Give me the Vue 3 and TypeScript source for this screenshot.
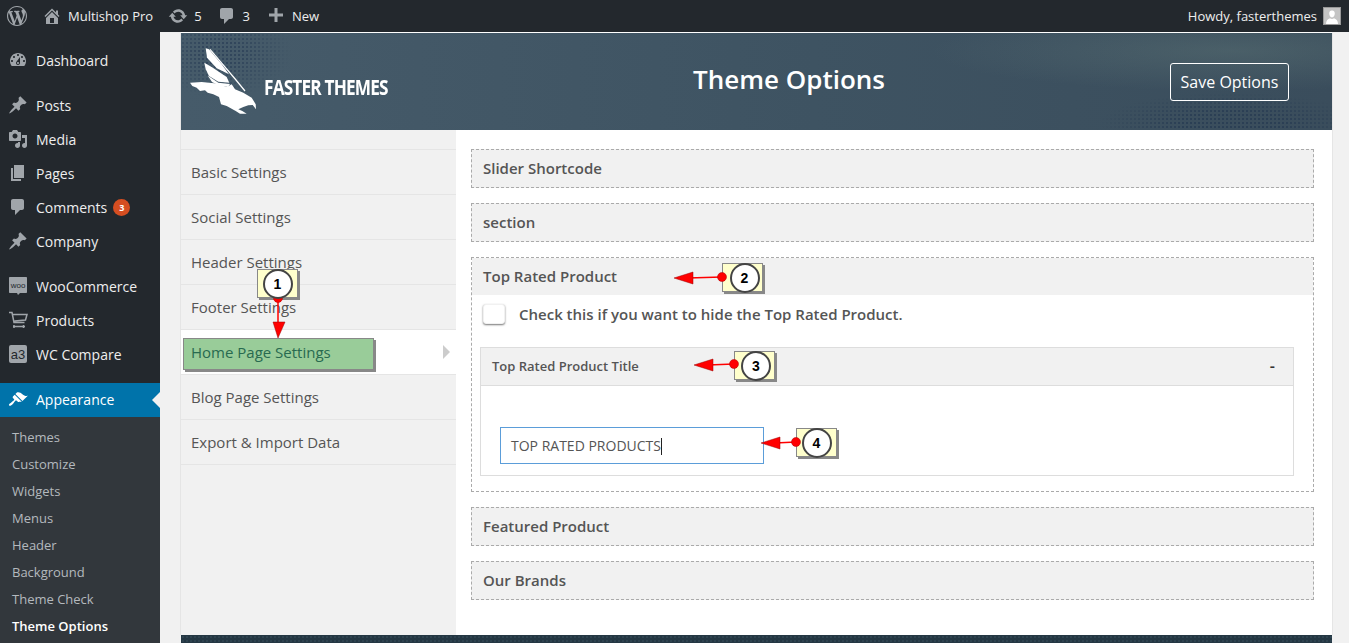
<script setup lang="ts">
interface MenuItem {
  label: string
  icon: string
  cls?: string
  badge?: number
  custom?: string
}

const paths = {
  wp: 'M20 10c0-5.51-4.49-10-10-10C4.48 0 0 4.49 0 10c0 5.52 4.48 10 10 10 5.51 0 10-4.48 10-10zM7.78 15.37L4.37 6.22c.55-.02 1.17-.08 1.17-.08.5-.06.44-1.13-.06-1.11 0 0-1.45.11-2.37.11-.18 0-.37 0-.58-.01C4.12 2.69 6.87 1.11 10 1.11c2.33 0 4.45.87 6.05 2.34-.68-.11-1.65.39-1.65 1.58 0 .74.45 1.36.9 2.1.35.61.55 1.36.55 2.46 0 1.49-1.4 5-1.4 5l-3.03-8.37c.54-.02.82-.17.82-.17.5-.05.44-1.25-.06-1.22 0 0-1.44.12-2.38.12-.87 0-2.33-.12-2.33-.12-.5-.03-.56 1.2-.06 1.22l.92.08 1.26 3.41zM17.41 10c.24-.64.74-1.87.43-4.25.7 1.29 1.05 2.71 1.05 4.25 0 3.29-1.73 6.24-4.4 7.78.97-2.59 1.94-5.2 2.92-7.78zM6.1 18.09C3.12 16.65 1.11 13.53 1.11 10c0-1.3.23-2.48.72-3.59C3.25 10.3 4.67 14.2 6.1 18.09zm4.03-6.63l2.58 6.98c-.86.29-1.76.45-2.71.45-.79 0-1.57-.11-2.29-.33.81-2.38 1.62-4.74 2.42-7.1z',
  home: 'M16 8.5l1.53 1.53-1.06 1.06L10 4.62l-6.47 6.47-1.06-1.06L10 2.5l4 4v-2h2v4zm-6-2.46l6 5.99V18H4v-5.97zM12 17v-5H8v5h4z',
  update: 'M10.2 3.28c3.53 0 6.43 2.61 6.92 6h2.08l-3.5 4-3.5-4h2.32c-.45-1.97-2.21-3.45-4.32-3.45-1.45 0-2.73.71-3.54 1.78L4.95 5.66C6.23 4.2 8.11 3.28 10.2 3.28zm-.4 13.44c-3.52 0-6.43-2.61-6.92-6H.8l3.5-4c1.17 1.33 2.33 2.67 3.5 4H5.48c.45 1.97 2.21 3.45 4.32 3.45 1.45 0 2.73-.71 3.54-1.78l1.71 1.95c-1.28 1.46-3.15 2.38-5.25 2.38z',
  comment: 'M5 2h9c1.1 0 2 .9 2 2v7c0 1.1-.9 2-2 2h-2l-5 5v-5H5c-1.1 0-2-.9-2-2V4c0-1.1.9-2 2-2z',
  plus: 'M17 7.5v3h-5.5V16h-3v-5.5H3v-3h5.5V2h3v5.5z',
  dashboard: 'M3.76 16h12.48c1.1-1.37 1.76-3.11 1.76-5 0-4.42-3.58-8-8-8s-8 3.58-8 8c0 1.89.66 3.63 1.76 5zM10 4c.55 0 1 .45 1 1s-.45 1-1 1-1-.45-1-1 .45-1 1-1zM6 6c.55 0 1 .45 1 1s-.45 1-1 1-1-.45-1-1 .45-1 1-1zm8 0c.55 0 1 .45 1 1s-.45 1-1 1-1-.45-1-1 .45-1 1-1zm-5.37 5.55L12 7v6c0 1.1-.9 2-2 2s-2-.9-2-2c0-.57.24-1.08.63-1.45zM4 10c.55 0 1 .45 1 1s-.45 1-1 1-1-.45-1-1 .45-1 1-1zm12 0c.55 0 1 .45 1 1s-.45 1-1 1-1-.45-1-1 .45-1 1-1zm-5 3c0-.55-.45-1-1-1s-1 .45-1 1 .45 1 1 1 1-.45 1-1z',
  pin: 'M10.44 3.02l1.82-1.82 6.36 6.35-1.83 1.82c-1.05-.68-2.48-.57-3.41.36l-.75.75c-.92.93-1.04 2.35-.35 3.41l-1.83 1.82-2.41-2.41-2.8 2.79c-.42.42-3.38 2.71-3.8 2.29s1.86-3.39 2.28-3.81l2.79-2.79L4.1 9.36l1.83-1.82c1.05.69 2.48.57 3.4-.36l.75-.75c.93-.92 1.05-2.35.36-3.41z',
  media: 'M13 11V4c0-.55-.45-1-1-1h-1.67L9 1H5L3.67 3H2c-.55 0-1 .45-1 1v7c0 .55.45 1 1 1h10c.55 0 1-.45 1-1zM7 4.5c1.38 0 2.5 1.12 2.5 2.5S8.38 9.5 7 9.5 4.5 8.38 4.5 7 5.62 4.5 7 4.5zM14 6h5v10.5c0 1.38-1.12 2.5-2.5 2.5S14 17.88 14 16.5s1.12-2.5 2.5-2.5c.17 0 .34.02.5.05V9h-3V6zm-4 8.05V13h2v3.5c0 1.38-1.12 2.5-2.5 2.5S7 17.88 7 16.5 8.12 14 9.5 14c.17 0 .34.02.5.05z',
  page: 'M6 15V2h10v13H6zm-1 1h8v2H3V5h2v11z',
  brush: 'M14.48 11.06L7.41 3.99l1.5-1.5c.5-.56 2.3-.47 3.51.32 1.21.8 1.43 1.28 2.91 2.1 1.18.64 2.45 1.26 4.45.85zm-.71.71L6.7 4.7 4.93 6.47c-.39.39-.39 1.02 0 1.41l1.06 1.06c.39.39.39 1.03 0 1.42-.6.6-1.43 1.11-2.21 1.69-.35.26-.7.53-1.01.84C1.43 13.23.4 14.75 1.2 15.55s2.32-.23 3.62-1.57c.31-.31.58-.66.84-1.01.58-.78 1.09-1.61 1.69-2.21.39-.39 1.02-.39 1.41 0l1.06 1.06c.39.39 1.02.39 1.41 0z'
}

const menu: MenuItem[] = [
  { label: 'Dashboard', icon: paths.dashboard },
  { label: 'Posts', icon: paths.pin, cls: 'gap-posts' },
  { label: 'Media', icon: paths.media },
  { label: 'Pages', icon: paths.page },
  { label: 'Comments', icon: paths.comment, badge: 3 },
  { label: 'Company', icon: paths.pin },
  { label: 'WooCommerce', icon: '', cls: 'gap-woo', custom: 'woo' },
  { label: 'Products', icon: '', custom: 'cart' },
  { label: 'WC Compare', icon: '', custom: 'a3' }
]

const submenu = ['Themes', 'Customize', 'Widgets', 'Menus', 'Header', 'Background', 'Theme Check']

const tabs = [
  'Basic Settings',
  'Social Settings',
  'Header Settings',
  'Footer Settings',
  'Home Page Settings',
  'Blog Page Settings',
  'Export & Import Data'
]

// numbered callouts pasted over the screenshot, x/y = yellow note top left
const notes = [
  { n: 1, x: 257, y: 269, pad: 0 },
  { n: 2, x: 722, y: 263, pad: 4 },
  { n: 3, x: 734, y: 351, pad: 3 },
  { n: 4, x: 796, y: 428, pad: 0 }
]

const arrows = [
  { line: [278, 298, 278, 325], head: '273,322 285,322 278,338', dot: [278, 298] },
  { line: [722, 277, 688, 278], head: '674,278 693,272 693,284', dot: [722, 277] },
  { line: [734, 364, 708, 365], head: '694,365 713,359 713,371', dot: [734, 364] },
  { line: [796, 442, 775, 443], head: '761,443 780,437 780,449', dot: [796, 442] }
]
</script>

<template>
  <div class="page">
    <header class="adminbar">
      <div class="bar-left">
        <svg class="wp" viewBox="0 0 20 20"><path :d="paths.wp" fill-rule="evenodd" /></svg>
        <span class="bar-item">
          <svg class="bar-icon" viewBox="0 0 20 20"><path :d="paths.home" /></svg>Multishop Pro
        </span>
        <span class="bar-item">
          <svg class="bar-icon" viewBox="0 0 20 20"><path :d="paths.update" /></svg>5
        </span>
        <span class="bar-item comments">
          <svg class="bar-icon" viewBox="0 0 20 20"><path :d="paths.comment" /></svg>3
        </span>
        <span class="bar-item">
          <svg class="bar-icon" viewBox="0 0 20 20"><path :d="paths.plus" /></svg>New
        </span>
      </div>
      <div class="howdy">
        Howdy, fasterthemes
        <span class="avatar">
          <svg viewBox="0 0 16 16"><path d="M8 2.500c1.800 0 2.800 1.300 2.800 3.100S9.700 9.500 8 9.500 5.200 7.400 5.200 5.600 6.200 2.500 8 2.500zM2 16c0-3.500 2-5.300 4-5.800.6.500 1.200.8 2 .8s1.400-.3 2-.8c2 .5 4 2.300 4 5.800z" /></svg>
        </span>
      </div>
    </header>

    <div class="layout">
      <aside class="sidebar">
        <nav class="menu">
          <a v-for="item in menu" :key="item.label" class="menu-item" :class="item.cls">
            <svg v-if="item.custom === 'woo'" class="menu-icon" viewBox="0 0 20 20">
              <path d="M2 1h16c.6 0 1 .4 1 1v14c0 .6-.4 1-1 1h-6l-2 2-1-2H2c-.6 0-1-.4-1-1V2c0-.6.4-1 1-1z" />
              <text x="10" y="11.500" class="woo-text">woo</text>
            </svg>
            <svg v-else-if="item.custom === 'cart'" class="menu-icon cart" viewBox="0 0 20 20">
              <path d="M1 2.500h3l2 10h10.500M4.500 4.500H19l-1.500 5.500-11 1" />
              <path d="M6 15v3M15.500 15v3M5 16.500h12" />
            </svg>
            <svg v-else-if="item.custom === 'a3'" class="menu-icon" viewBox="0 0 20 20">
              <rect x="1" y="1" width="18" height="18" rx="2" />
              <text x="10" y="14.500" class="a3-text">a3</text>
            </svg>
            <svg v-else class="menu-icon" viewBox="0 0 20 20"><path :d="item.icon" fill-rule="evenodd" /></svg>
            <span>{{ item.label }}</span>
            <span v-if="item.badge" class="badge">{{ item.badge }}</span>
          </a>
        </nav>

        <a class="menu-item current">
          <svg class="menu-icon" viewBox="0 0 20 20"><path :d="paths.brush" /></svg>
          <span>Appearance</span>
        </a>
        <ul class="submenu">
          <li v-for="s in submenu" :key="s">{{ s }}</li>
          <li class="on">Theme Options</li>
        </ul>
      </aside>

      <main class="content">
        <section class="panel">
          <div class="panel-head">
            <div class="logo">
              <svg class="eagle" viewBox="0 0 66 66">
                <path d="M15.700 .3L19 1.300 31.700 16.300 39 26.300 26.700 20.300 17 9.700z" />
                <path d="M14.300 14.700L21.700 19 36.700 29 39.300 34.700 28.300 33.700 19 28 15.700 21.300z" />
                <path d="M17.700 27.500L28.300 34.700 40 36 38 39 30 38 22 34z" />
                <path d="M0 34.700L11.700 34 26.700 35.500 36.700 39 41.700 36.300 45 41.300 53.300 44.700 61.700 49.700 65.700 56.300 66 61.300 62.700 57 58.300 57.300 53.300 59 48.300 61.300 52.300 63 56.700 65.700 50 65.700 45.700 63 36.700 58 31 56.300 29 49 23.300 46.300 17.700 44.700 15 42.300 10 43 6.700 39.700 2.300 38z" />
                <path class="edge" d="M20 1.300L46 32 55 43" />
              </svg>
              <span class="brand">FASTER THEMES</span>
            </div>
            <h1>Theme Options</h1>
            <button class="save">Save Options</button>
          </div>

          <div class="panel-body">
            <ul class="tabs">
              <li v-for="t in tabs" :key="t" :class="{ active: t === 'Home Page Settings' }">{{ t }}</li>
            </ul>

            <div class="sections">
              <div class="section"><h3>Slider Shortcode</h3></div>
              <div class="section"><h3>section</h3></div>
              <div class="section open">
                <h3>Top Rated Product</h3>
                <label class="check">
                  <span class="checkbox"></span>
                  Check this if you want to hide the Top Rated Product.
                </label>
                <div class="field">
                  <div class="field-head">
                    <span>Top Rated Product Title</span>
                    <span class="minus">-</span>
                  </div>
                  <div class="field-body">
                    <div class="input">TOP RATED PRODUCTS<i class="caret"></i></div>
                  </div>
                </div>
              </div>
              <div class="section"><h3>Featured Product</h3></div>
              <div class="section"><h3>Our Brands</h3></div>
            </div>
          </div>
        </section>
        <div class="panel-foot"></div>
      </main>
    </div>

    <!-- screenshot annotations -->
    <div class="hilite">Home Page Settings</div>
    <div
      v-for="note in notes"
      :key="note.n"
      class="note"
      :style="{ left: note.x + 'px', top: note.y + 'px', paddingLeft: note.pad + 'px' }"
    >
      <span class="num">{{ note.n }}</span>
    </div>
    <svg class="arrows" width="1349" height="643">
      <g v-for="(a, i) in arrows" :key="i">
        <line :x1="a.line[0]" :y1="a.line[1]" :x2="a.line[2]" :y2="a.line[3]" stroke="#f00" stroke-width="1.500" />
        <polygon :points="a.head" fill="#f00" stroke="#900" stroke-width="0.500" />
        <circle :cx="a.dot[0]" :cy="a.dot[1]" r="4.500" fill="#f00" stroke="#a00" stroke-width="0.500" />
      </g>
    </svg>
  </div>
</template>

<style>
html,
body {
  margin: 0;
  background: #f1f1f1;
  overflow: hidden;
}
</style>

<style scoped>
.page {
  position: relative;
  width: 1349px;
  height: 643px;
  overflow: hidden;
  font-family: "Open Sans", "Liberation Sans", sans-serif;
  font-size: 14px;
  color: #444;
}

.adminbar {
  display: flex;
  justify-content: space-between;
  align-items: center;
  height: 32px;
  background: #23282d;
  color: #eee;
  font-size: 13px;
}

.bar-left {
  display: flex;
  align-items: center;
  padding-left: 7px;
}

.wp {
  width: 20px;
  height: 20px;
  fill: #a0a5aa;
  margin-right: 15px;
}

.bar-item {
  display: flex;
  align-items: center;
  margin-right: 15px;
}

.bar-item.comments {
  margin-right: 16px;
}

.bar-icon {
  width: 20px;
  height: 20px;
  fill: #a0a5aa;
  margin-right: 6px;
}

.howdy {
  display: flex;
  align-items: center;
  gap: 6px;
  padding-right: 8px;
}

.avatar {
  display: block;
  width: 16px;
  height: 16px;
  border: 1px solid #999;
  background: #c4c4c4;
  line-height: 0;
}

.avatar svg {
  width: 16px;
  height: 16px;
  fill: #fff;
}

.layout {
  display: flex;
  height: 611px;
}

.sidebar {
  width: 160px;
  flex: none;
  background: #23282d;
  padding-top: 11px;
  box-sizing: border-box;
}

.menu-item {
  display: flex;
  align-items: center;
  height: 34px;
  padding-left: 8px;
  color: #eee;
}

.menu-item.gap-posts {
  margin-top: 11px;
}

.menu-item.gap-woo {
  margin-top: 11px;
}

.menu-icon {
  width: 20px;
  height: 20px;
  flex: none;
  fill: #a0a5aa;
  margin-right: 8px;
}

.menu-icon.cart {
  fill: none;
  stroke: #a0a5aa;
  stroke-width: 1.500;
}

.woo-text,
.a3-text {
  fill: #23282d;
  text-anchor: middle;
  font-family: "Liberation Sans", sans-serif;
}

.woo-text {
  font-size: 8px;
}

.a3-text {
  font-size: 13px;
}

.badge {
  display: inline-block;
  width: 17px;
  height: 17px;
  margin-left: 6px;
  border-radius: 50%;
  background: #d54e21;
  color: #fff;
  font-size: 9px;
  font-weight: 700;
  line-height: 17px;
  text-align: center;
}

.menu-item.current {
  position: relative;
  margin-top: 12px;
  height: 34px;
  box-sizing: border-box;
  padding-bottom: 1px;
  background: #0073aa;
  color: #fff;
}

.menu-item.current .menu-icon {
  fill: #fff;
}

.menu-item.current::after {
  content: "";
  position: absolute;
  right: 0;
  top: 9px;
  border: 8px solid transparent;
  border-right-color: #f1f1f1;
}

.submenu {
  list-style: none;
  margin: 0;
  padding: 7px 0 0;
  background: #32373c;
  height: 220px;
  font-size: 13px;
}

.submenu li {
  height: 27px;
  line-height: 27px;
  padding-left: 12px;
  color: #b4b9be;
}

.submenu li.on {
  color: #fff;
  font-weight: 600;
}

.content {
  flex: 1;
  padding: 0 16px 0 20px;
  min-width: 0;
}

.panel {
  height: 603px;
  box-sizing: border-box;
  background: #fff;
  display: flex;
  flex-direction: column;
  border-top: 1px solid #fff;
  border-left: 1px solid #e5e5e5;
  border-right: 1px solid #e5e5e5;
}

.panel-head {
  position: relative;
  display: flex;
  align-items: center;
  justify-content: space-between;
  height: 97px;
  flex: none;
  padding: 0 43px 0 9px;
  color: #fff;
  background-color: #3e5362;
  background-image:
    radial-gradient(ellipse 300px 40px at 1050px 18px, rgba(110, 135, 130, 0.3), transparent),
    linear-gradient(90deg, #465b6a 0%, #3e5362 55%, #3a4d5c 100%);
}

/* speckled texture of the banner image */
.panel-head::before {
  content: "";
  position: absolute;
  inset: 0;
  background-image: radial-gradient(circle, rgba(25, 45, 75, 0.45) 0.7px, transparent 1.1px);
  background-size: 4px 4px;
  -webkit-mask-image:
    radial-gradient(ellipse 130px 30px at 1050px 90px, #000 40%, transparent),
    radial-gradient(ellipse 70px 45px at 40px 20px, #000 30%, transparent);
  mask-image:
    radial-gradient(ellipse 130px 30px at 1050px 90px, #000 40%, transparent),
    radial-gradient(ellipse 70px 45px at 40px 20px, #000 30%, transparent);
}

.logo {
  position: relative;
  display: flex;
  align-items: center;
}

.eagle {
  width: 66px;
  height: 66px;
  fill: #fff;
  margin-top: -1px;
}

.eagle .edge {
  fill: none;
  stroke: #fff;
  stroke-width: 1.200;
}

.brand {
  margin: 11px 0 0 8px;
  font-size: 21px;
  font-weight: 700;
  letter-spacing: -1px;
  white-space: nowrap;
  transform: scaleX(0.82);
  transform-origin: left;
}

.panel-head h1 {
  position: absolute;
  left: 512px;
  top: 26px;
  margin: 0;
  font-size: 26px;
  font-weight: 600;
  line-height: 40px;
}

.save {
  position: relative;
  width: 119px;
  height: 38px;
  border: 1px solid #fff;
  border-radius: 3px;
  background: transparent;
  color: #fff;
  font: 16px "Open Sans", sans-serif;
  padding: 0;
}

.panel-body {
  display: flex;
  flex: 1;
  min-height: 0;
}

.tabs {
  list-style: none;
  width: 275px;
  flex: none;
  margin: 0;
  padding: 19px 0 0;
  background: #f1f1f1;
  font-size: 15px;
  color: #555;
}

.tabs li {
  height: 44px;
  line-height: 44px;
  padding-left: 10px;
  border-top: 1px solid #e5e5e5;
}

.tabs li:last-child {
  border-bottom: 1px solid #e5e5e5;
}

.tabs li.active {
  position: relative;
  background: #fff;
}

.tabs li.active::after {
  content: "";
  position: absolute;
  right: 6px;
  top: 15px;
  border: 7px solid transparent;
  border-left-color: #ccc;
  border-right-width: 0;
}

.sections {
  flex: 1;
  display: flex;
  flex-direction: column;
  gap: 15px;
  padding: 19px 18px 0 15px;
  min-width: 0;
}

.section {
  border: 1px dashed #aaa;
  background: #f1f1f1;
}

.section h3 {
  margin: 0;
  height: 37px;
  line-height: 37px;
  padding-left: 11px;
  font-size: 15px;
  font-weight: 600;
  color: #555;
  background: #f1f1f1;
}

.section.open {
  background: #fff;
  padding-bottom: 15px;
}

.check {
  display: flex;
  align-items: center;
  height: 38px;
  padding: 0 0 0 11px;
  margin-bottom: 14px;
  font-weight: 600;
  font-size: 15px;
  color: #555;
}

.checkbox {
  width: 20px;
  height: 18px;
  margin-right: 14px;
  background: #fff;
  border-radius: 3px;
  border: 1px solid #f1f1f1;
  box-shadow: 0 1px 2px #777;
}

.field {
  margin: 0 19px 0 8px;
  border: 1px solid #ddd;
}

.field-head {
  display: flex;
  justify-content: space-between;
  height: 37px;
  line-height: 37px;
  padding: 0 18px 0 11px;
  background: #f1f1f1;
  border-bottom: 1px solid #ddd;
  font-size: 13px;
  font-weight: 600;
  color: #555;
}

.minus {
  font-size: 16px;
  color: #333;
}

.field-body {
  height: 89px;
  padding: 41px 0 0 19px;
  box-sizing: border-box;
}

.input {
  width: 264px;
  height: 37px;
  box-sizing: border-box;
  border: 1px solid #5b9dd9;
  padding-left: 10px;
  line-height: 35px;
  font-size: 14px;
  color: #555;
  white-space: nowrap;
}

.caret {
  display: inline-block;
  width: 1px;
  height: 17px;
  background: #222;
  vertical-align: -4px;
}

.panel-foot {
  height: 8px;
  background-color: #243743;
  background-image: radial-gradient(circle, #2e4350 0.7px, transparent 1.1px);
  background-size: 4px 4px;
  margin-left: 1px;
  margin-right: 1px;
}

/* annotation layer */
.hilite {
  position: absolute;
  left: 183px;
  top: 338px;
  width: 191px;
  height: 32px;
  box-sizing: border-box;
  padding-left: 7px;
  line-height: 27px;
  font-size: 15px;
  color: #286a50;
  background: #99cc99;
  border: 1px solid #888;
  box-shadow: 2px 2px 0 #888;
}

.arrows {
  position: absolute;
  left: 0;
  top: 0;
  z-index: 2;
  pointer-events: none;
}

.note {
  position: absolute;
  width: 41px;
  height: 29px;
  box-sizing: border-box;
  display: flex;
  align-items: center;
  justify-content: center;
  background: #ffffcc;
  border: 1px solid #888;
  box-shadow: 2px 2px 0 #888;
}

.num {
  position: relative;
  z-index: 3;
  width: 26px;
  height: 26px;
  border: 2px solid #444;
  border-radius: 50%;
  background: #fff;
  color: #000;
  font: 700 14px/26px "Liberation Sans", sans-serif;
  text-align: center;
  flex: none;
}
</style>
